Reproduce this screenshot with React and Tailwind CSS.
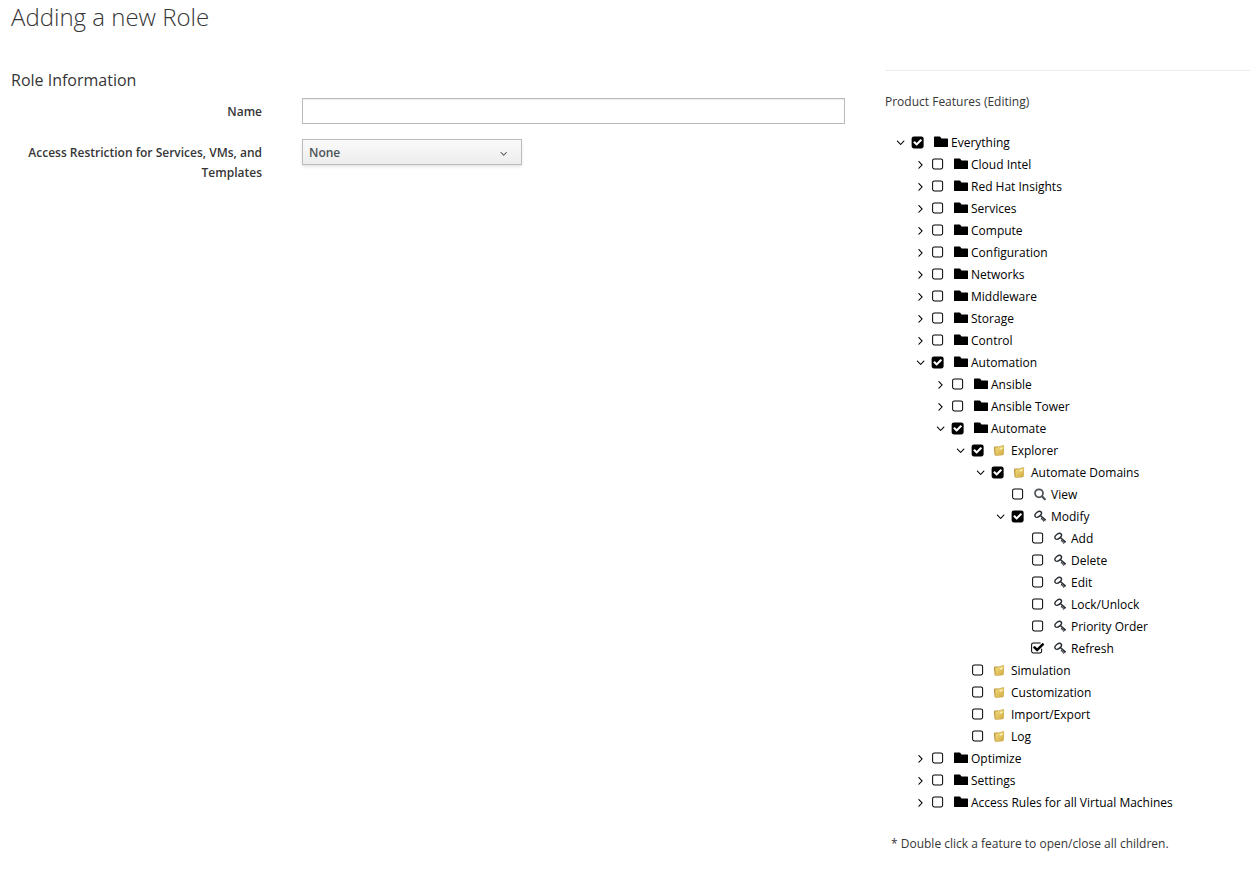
import { useState } from 'react';

const FEATURES = {
  label: 'Everything',
  icon: 'folder',
  checked: true,
  open: true,
  children: [
    { label: 'Cloud Intel', icon: 'folder', children: [] },
    { label: 'Red Hat Insights', icon: 'folder', children: [] },
    { label: 'Services', icon: 'folder', children: [] },
    { label: 'Compute', icon: 'folder', children: [] },
    { label: 'Configuration', icon: 'folder', children: [] },
    { label: 'Networks', icon: 'folder', children: [] },
    { label: 'Middleware', icon: 'folder', children: [] },
    { label: 'Storage', icon: 'folder', children: [] },
    { label: 'Control', icon: 'folder', children: [] },
    {
      label: 'Automation',
      icon: 'folder',
      checked: true,
      open: true,
      children: [
        { label: 'Ansible', icon: 'folder', children: [] },
        { label: 'Ansible Tower', icon: 'folder', children: [] },
        {
          label: 'Automate',
          icon: 'folder',
          checked: true,
          open: true,
          children: [
            {
              label: 'Explorer',
              icon: 'gold',
              checked: true,
              open: true,
              children: [
                {
                  label: 'Automate Domains',
                  icon: 'gold',
                  checked: true,
                  open: true,
                  children: [
                    { label: 'View', icon: 'search' },
                    {
                      label: 'Modify',
                      icon: 'key',
                      checked: true,
                      open: true,
                      children: [
                        { label: 'Add', icon: 'key' },
                        { label: 'Delete', icon: 'key' },
                        { label: 'Edit', icon: 'key' },
                        { label: 'Lock/Unlock', icon: 'key' },
                        { label: 'Priority Order', icon: 'key' },
                        { label: 'Refresh', icon: 'key', checked: true },
                      ],
                    },
                  ],
                },
              ],
            },
            { label: 'Simulation', icon: 'gold' },
            { label: 'Customization', icon: 'gold' },
            { label: 'Import/Export', icon: 'gold' },
            { label: 'Log', icon: 'gold' },
          ],
        },
      ],
    },
    { label: 'Optimize', icon: 'folder', children: [] },
    { label: 'Settings', icon: 'folder', children: [] },
    { label: 'Access Rules for all Virtual Machines', icon: 'folder', children: [] },
  ],
};

const ANGLE_RIGHT =
  'M1171 960q0 13-10 23l-466 466q-10 10-23 10t-23-10l-50-50q-10-10-10-23t10-23l393-393-393-393q-10-10-10-23t10-23l50-50q10-10 23-10t23 10l466 466q10 10 10 23z';
const ANGLE_DOWN =
  'M1395 736q0 13-10 23l-466 466q-10 10-23 10t-23-10l-466-466q-10-10-10-23t10-23l50-50q10-10 23-10t23 10l393 393 393-393q10-10 23-10t23 10l50 50q10 10 10 23z';
const BOX_FILLED =
  'M813 1299l614-614q19-19 19-45t-19-45l-102-102q-19-19-45-19t-45 19l-467 467-211-211q-19-19-45-19t-45 19l-102 102q-19 19-19 45t19 45l358 358q19 19 45 19t45-19zm851-883v960q0 119-84.5 203.5t-203.5 84.5h-960q-119 0-203.5-84.5t-84.5-203.5v-960q0-119 84.5-203.5t203.5-84.5h960q119 0 203.5 84.5t84.5 203.5z';
const BOX_EMPTY =
  'M1312 256h-832q-66 0-113 47t-47 113v832q0 66 47 113t113 47h832q66 0 113-47t47-113v-832q0-66-47-113t-113-47zm288 160v832q0 119-84.5 203.5t-203.5 84.5h-832q-119 0-203.5-84.5t-84.5-203.5v-832q0-119 84.5-203.5t203.5-84.5h832q119 0 203.5 84.5t84.5 203.5z';
const BOX_TICKED =
  'M1472 930v318q0 119-84.5 203.5t-203.5 84.5h-832q-119 0-203.5-84.5t-84.5-203.5v-832q0-119 84.5-203.5t203.5-84.5h832q63 0 117 25 15 7 18 23 3 17-9 29l-49 49q-10 10-23 10-3 0-9-2-23-6-45-6h-832q-66 0-113 47t-47 113v832q0 66 47 113t113 47h832q66 0 113-47t47-113v-254q0-13 9-22l64-64q10-10 23-10 6 0 12 3 20 8 20 29zm231-489l-814 814q-24 24-57 24t-57-24l-430-430q-24-24-24-57t24-57l110-110q24-24 57-24t57 24l263 263 647-647q24-24 57-24t57 24l110 110q24 24 24 57t-24 57z';

function Glyph({ d, className }) {
  return (
    <svg viewBox="48 72 1792 1792" fill="currentColor" aria-hidden="true" className={className}>
      <path d={d} />
    </svg>
  );
}

function NodeIcon({ name }) {
  if (name === 'folder') {
    return (
      <svg viewBox="0 0 16 16" aria-hidden="true" className="size-4">
        <path d="M1 2q0-.6.6-.6h4.8q.5 0 .8.4l1.300 1.600h5.900q.6 0 .6.6v7.400q0 .6-.6.6H1.600q-.6 0-.6-.6z" fill="#000" />
      </svg>
    );
  }
  if (name === 'gold') {
    return (
      <svg viewBox="0 0 16 16" aria-hidden="true" className="size-4">
        <defs>
          <linearGradient id="gold-front" x1="0" y1="0" x2="1" y2="1">
            <stop offset="0" stopColor="#f2df84" />
            <stop offset="1" stopColor="#d2a83c" />
          </linearGradient>
        </defs>
        <path d="M.9 3.800l3.500-.5.600.5 5-1.500 1.200.4-.7 8.800-.8.700-7.200.6z" fill="#c19b42" />
        <path d="M1 4.200l1.300.3.300 7.900-1-.5z" fill="#b8923a" />
        <path d="M2.300 4.600l3.500-.4 1-.8 4.300-.6-.8 8.800-7.700.8z" fill="url(#gold-front)" />
        <path d="M6.800 4.700l3-.5-.2 1.900-2.900.6z" fill="#f8efbb" />
      </svg>
    );
  }
  if (name === 'search') {
    return (
      <svg viewBox="0 0 16 16" aria-hidden="true" className="size-4" fill="none" stroke="#4d5258">
        <circle cx="6" cy="6.300" r="4" strokeWidth="1.700" />
        <path d="M9.200 9.500l2.700 2.700" strokeWidth="2.200" strokeLinecap="round" />
      </svg>
    );
  }
  return (
    <svg viewBox="0 0 16 16" aria-hidden="true" className="size-4" fill="none" stroke="#292e34">
      <ellipse cx="5.200" cy="5.300" rx="3.700" ry="2.300" strokeWidth="1.400" transform="rotate(-38 5.200 5.300)" />
      <path d="M7.300 6.500l5 4.300" strokeWidth="1.500" strokeLinecap="round" />
      <path d="M9.300 8.700l-1 1.300M11.700 10.700l-1.100 1.400M10.500 9.700l-.9 1.100" strokeWidth="1.200" strokeLinecap="round" />
    </svg>
  );
}

function TreeNode({ node }) {
  const [open, setOpen] = useState(Boolean(node.open));
  const [checked, setChecked] = useState(Boolean(node.checked));
  const box = !checked ? BOX_EMPTY : node.children ? BOX_FILLED : BOX_TICKED;

  return (
    <li>
      <div className="flex h-[22px] items-center" onDoubleClick={() => setOpen(!open)}>
        {node.children ? (
          <button
            type="button"
            aria-label={`Toggle ${node.label}`}
            aria-expanded={open}
            onClick={() => setOpen(!open)}
            className="mr-1 flex w-3 cursor-pointer items-center justify-center"
          >
            <Glyph d={open ? ANGLE_DOWN : ANGLE_RIGHT} className="size-3.5 shrink-0" />
          </button>
        ) : (
          <span className="mr-1 w-3" />
        )}
        <label className="flex cursor-pointer items-center whitespace-nowrap">
          <input
            type="checkbox"
            checked={checked}
            onChange={(e) => setChecked(e.target.checked)}
            className="peer sr-only"
          />
          <Glyph d={box} className="mr-2 size-3.5 peer-focus-visible:outline" />
          <span className="mr-0.5">
            <NodeIcon name={node.icon} />
          </span>
          {node.label}
        </label>
      </div>
      {open && node.children && node.children.length > 0 && (
        <ul className="pl-5">
          {node.children.map((child) => (
            <TreeNode key={child.label} node={child} />
          ))}
        </ul>
      )}
    </li>
  );
}

export default function App() {
  return (
    <main className="min-h-screen bg-white pt-1 pl-[11px] font-['Open_Sans',sans-serif] text-xs leading-5 text-[#363636]">
      <h1 className="text-2xl leading-[26px] font-light">Adding a new Role</h1>
      <div className="mt-10 flex gap-10">
        <form className="min-w-0 flex-1" onSubmit={(e) => e.preventDefault()}>
          <h2 className="text-base leading-5">Role Information</h2>
          <div className="mt-2 grid grid-cols-[minmax(0,251fr)_minmax(0,543fr)] gap-x-10 gap-y-[15px]">
            <label htmlFor="role-name" className="pt-1 text-right font-semibold">
              Name
            </label>
            <input
              id="role-name"
              type="text"
              className="h-[26px] w-full border border-[#bbb] bg-white px-1.5 shadow-[inset_0_1px_1px_rgba(3,3,3,0.075)] outline-none focus:border-[#0088ce]"
            />
            <label htmlFor="restriction" className="pt-1 text-right font-semibold">
              Access Restriction for Services, VMs, and Templates
            </label>
            <div className="relative h-[26px] w-[220px] max-w-full">
              <select
                id="restriction"
                className="h-[26px] w-full appearance-none border border-[#bbb] bg-linear-to-b from-[#fafafa] to-[#ededed] px-1.5 pt-0.5 font-semibold text-[#4d5258] shadow-[0_2px_3px_rgba(3,3,3,0.1)]"
              >
                <option>None</option>
              </select>
              <Glyph
                d={ANGLE_DOWN}
                className="pointer-events-none absolute top-[9px] right-3 size-3 text-[#4d5258]"
              />
            </div>
          </div>
        </form>
        <section className="w-[365px] shrink-0">
          <hr className="border-[#ededed]" />
          <h3 className="mt-[21px]">Product Features (Editing)</h3>
          <ul className="mt-5 pl-2.5 text-black">
            <TreeNode node={FEATURES} />
          </ul>
          <p className="mt-5 pl-1.5">* Double click a feature to open/close all children.</p>
        </section>
      </div>
    </main>
  );
}
